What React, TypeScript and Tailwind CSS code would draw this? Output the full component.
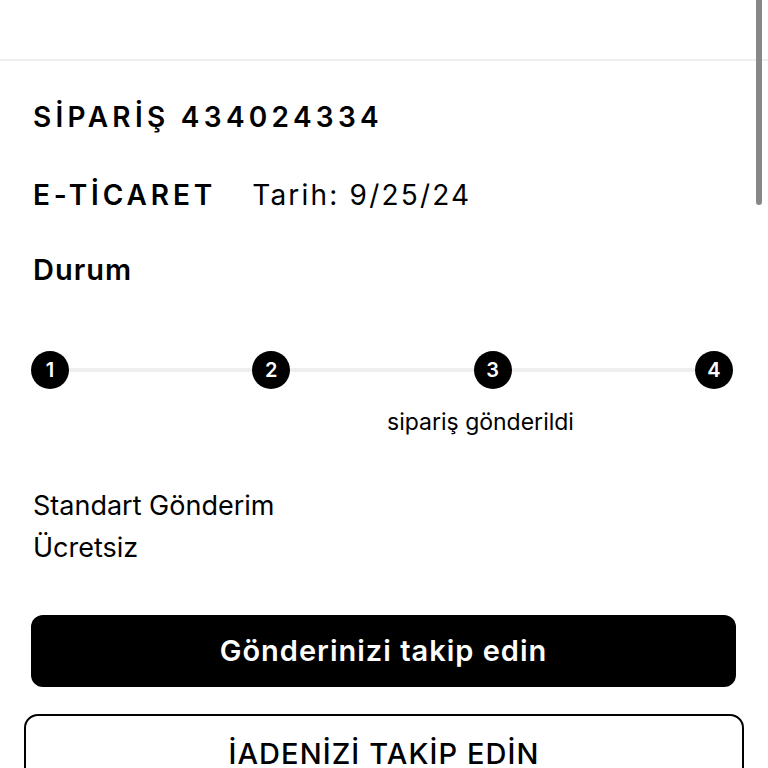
import React from "react";

export default function App() {
  const steps = ["1", "2", "3", "4"];
  return (
    <div
      className="relative w-[768px] h-[768px] overflow-hidden bg-white text-black"
      style={{ fontFamily: "Inter, 'Noto Sans', sans-serif" }}
    >
      <div className="h-[61px] border-b-2 border-[#efefef]" />
      <div className="px-[33px] pt-[36px]">
        <h1 className="text-[28px] leading-[40px] font-semibold tracking-[4.3px] whitespace-nowrap">SİPARİŞ 434024334</h1>
        <div className="mt-[38px] flex items-center whitespace-nowrap">
          <span className="text-[28px] leading-[40px] font-semibold tracking-[3.9px]">E-TİCARET</span>
          <span className="ml-[36px] text-[28px] leading-[40px] font-normal tracking-[2.2px]">Tarih: 9/25/24</span>
        </div>
        <div className="mt-[35px] text-[29px] leading-[40px] font-semibold tracking-[1px]">Durum</div>
      </div>

      <div className="mt-[61px] ml-[31px] w-[702px]">
        <div className="relative flex items-center justify-between">
          <div className="absolute left-[19px] right-[19px] top-1/2 -translate-y-1/2 h-[4px] bg-[#eeeeee]" />
          {steps.map((s) => (
            <div
              key={s}
              className="relative z-10 w-[38px] h-[38px] rounded-full bg-black text-white flex items-center justify-center text-[20px] font-semibold"
            >
              {s}
            </div>
          ))}
        </div>
        <div className="flex">
          <div className="ml-[356px] mt-[18px] text-[23px] leading-[30px] whitespace-nowrap">sipariş gönderildi</div>
        </div>
      </div>

      <div className="px-[33px] mt-[48px] text-[27px] leading-[42px] font-normal">
        <div>Standart Gönderim</div>
        <div>Ücretsiz</div>
      </div>

      <div className="ml-[31px] mt-[46px]">
        <button className="w-[705px] h-[72px] rounded-[12px] bg-black text-white text-[29px] leading-[40px] font-semibold tracking-[1px] flex items-center justify-center">
          Gönderinizi takip edin
        </button>
      </div>
      <div className="ml-[24px] mt-[27px]">
        <button className="w-[720px] h-[72px] rounded-[14px] border-2 border-black bg-white text-black text-[29px] leading-[40px] font-medium tracking-[1.1px] flex items-start justify-center pt-[18px]">
          İADENİZİ TAKİP EDİN
        </button>
      </div>

      <div className="absolute right-[6px] top-0 w-[6px] h-[205px] rounded-b-full bg-[#878787]" />
    </div>
  );
}
